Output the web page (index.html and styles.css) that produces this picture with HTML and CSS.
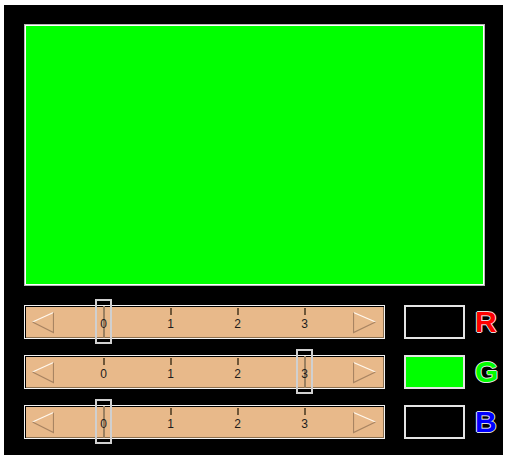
FILE: index.html
```html
<!DOCTYPE html>
<html>
<head>
<meta charset="utf-8">
<link rel="stylesheet" href="styles.css">
</head>
<body>
<div class="screen">
  <div class="canvas"></div>
  <div class="rows">
    <div class="row">
      <div class="slider">
        <svg class="arrow" width="22" height="22" viewBox="0 0 22 22"><path d="M0.5 10 L21.5 0.5" stroke="#fff8ee" stroke-width="1.2" fill="none"/><path d="M0.5 10 L21.5 20.5 L21.5 0.5" stroke="#a88462" stroke-width="1.2" fill="none"/></svg>
        <div class="ticks">
          <div class="tick"><span class="mark"></span><span class="label">0</span><div class="thumb"></div></div>
          <div class="tick"><span class="mark"></span><span class="label">1</span></div>
          <div class="tick"><span class="mark"></span><span class="label">2</span></div>
          <div class="tick"><span class="mark"></span><span class="label">3</span></div>
        </div>
        <svg class="arrow rarrow" width="23" height="22" viewBox="0 0 23 22"><path d="M0.5 0.5 L22.5 10" stroke="#fff8ee" stroke-width="1.2" fill="none"/><path d="M0.5 0.5 L0.5 20.5 L22.5 10" stroke="#a88462" stroke-width="1.2" fill="none"/></svg>
      </div>
      <div class="swatch"></div>
      <div class="letter red">R</div>
    </div>
    <div class="row">
      <div class="slider">
        <svg class="arrow" width="22" height="22" viewBox="0 0 22 22"><path d="M0.5 10 L21.5 0.5" stroke="#fff8ee" stroke-width="1.2" fill="none"/><path d="M0.5 10 L21.5 20.5 L21.5 0.5" stroke="#a88462" stroke-width="1.2" fill="none"/></svg>
        <div class="ticks">
          <div class="tick"><span class="mark"></span><span class="label">0</span></div>
          <div class="tick"><span class="mark"></span><span class="label">1</span></div>
          <div class="tick"><span class="mark"></span><span class="label">2</span></div>
          <div class="tick"><span class="mark"></span><span class="label">3</span><div class="thumb"></div></div>
        </div>
        <svg class="arrow rarrow" width="23" height="22" viewBox="0 0 23 22"><path d="M0.5 0.5 L22.5 10" stroke="#fff8ee" stroke-width="1.2" fill="none"/><path d="M0.5 0.5 L0.5 20.5 L22.5 10" stroke="#a88462" stroke-width="1.2" fill="none"/></svg>
      </div>
      <div class="swatch green"></div>
      <div class="letter grn">G</div>
    </div>
    <div class="row">
      <div class="slider">
        <svg class="arrow" width="22" height="22" viewBox="0 0 22 22"><path d="M0.5 10 L21.5 0.5" stroke="#fff8ee" stroke-width="1.2" fill="none"/><path d="M0.5 10 L21.5 20.5 L21.5 0.5" stroke="#a88462" stroke-width="1.2" fill="none"/></svg>
        <div class="ticks">
          <div class="tick"><span class="mark"></span><span class="label">0</span><div class="thumb"></div></div>
          <div class="tick"><span class="mark"></span><span class="label">1</span></div>
          <div class="tick"><span class="mark"></span><span class="label">2</span></div>
          <div class="tick"><span class="mark"></span><span class="label">3</span></div>
        </div>
        <svg class="arrow rarrow" width="23" height="22" viewBox="0 0 23 22"><path d="M0.5 0.5 L22.5 10" stroke="#fff8ee" stroke-width="1.2" fill="none"/><path d="M0.5 0.5 L0.5 20.5 L22.5 10" stroke="#a88462" stroke-width="1.2" fill="none"/></svg>
      </div>
      <div class="swatch"></div>
      <div class="letter blue">B</div>
    </div>
  </div>
</div>
</body>
</html>
```

FILE: styles.css
```css
html, body {
  margin: 0;
  padding: 0;
  background: #fff;
}
.screen {
  margin: 5px 0 0 4px;
  width: 499px;
  height: 450px;
  box-sizing: border-box;
  padding: 19px 18px 0 20px;
  background: #000;
  font-family: "Liberation Sans", Arial, sans-serif;
}
.canvas {
  width: 461px;
  height: 262px;
  box-sizing: border-box;
  background: #00ff00;
  border: 1px solid #b8b8b8;
  box-shadow: inset 0 0 0 1px #fff;
}
.rows {
  margin-top: 19px;
  display: flex;
  flex-direction: column;
  gap: 16px;
}
.row {
  display: flex;
  align-items: center;
  height: 34px;
}
.row > * {
  flex-shrink: 0;
}
.slider {
  width: 361px;
  height: 34px;
  box-sizing: border-box;
  border: 1px solid #f4f4f4;
  background: #e8b98a;
  box-shadow: inset 1px 1px 0 #000, inset -1px -1px 0 #8a6f50;
  display: flex;
  align-items: center;
}
.arrow {
  display: block;
  flex-shrink: 0;
  margin-left: 7px;
  margin-top: 1px;
}
.rarrow {
  margin-left: 15px;
}
.ticks {
  display: flex;
  flex-shrink: 0;
  margin-left: 16px;
  height: 32px;
}
.tick {
  position: relative;
  width: 67px;
  flex-shrink: 0;
  display: flex;
  flex-direction: column;
  align-items: center;
}
.mark {
  display: block;
  width: 2px;
  height: 7px;
  margin-top: 2px;
  background: #6e5638;
}
.label {
  position: relative;
  z-index: 2;
  margin-top: 2px;
  font-size: 12px;
  line-height: 14px;
  color: #1c1c1c;
}
.thumb {
  position: absolute;
  top: -7px;
  left: 25px;
  width: 17px;
  height: 45px;
  box-sizing: border-box;
  border: 2px solid #d0d0d0;
  z-index: 1;
}
.thumb::after {
  content: "";
  position: absolute;
  left: 5.5px;
  top: 5px;
  width: 2px;
  height: 32px;
  background: #9a8060;
}
.swatch {
  margin-left: 19px;
  width: 61px;
  height: 34px;
  box-sizing: border-box;
  border: 2px solid #e4e4e4;
  background: #000;
}
.swatch.green {
  background: #00ff00;
}
.letter {
  margin-left: 10px;
  font-size: 30px;
  font-weight: bold;
  line-height: 34px;
  text-shadow: 1px 0 0 #e0e0e0, -1px 0 0 #e0e0e0, 0 1px 0 #e0e0e0, 0 -1px 0 #e0e0e0;
}
.red { color: #ff0000; }
.grn { color: #00ff00; }
.blue { color: #0000ff; }
```
